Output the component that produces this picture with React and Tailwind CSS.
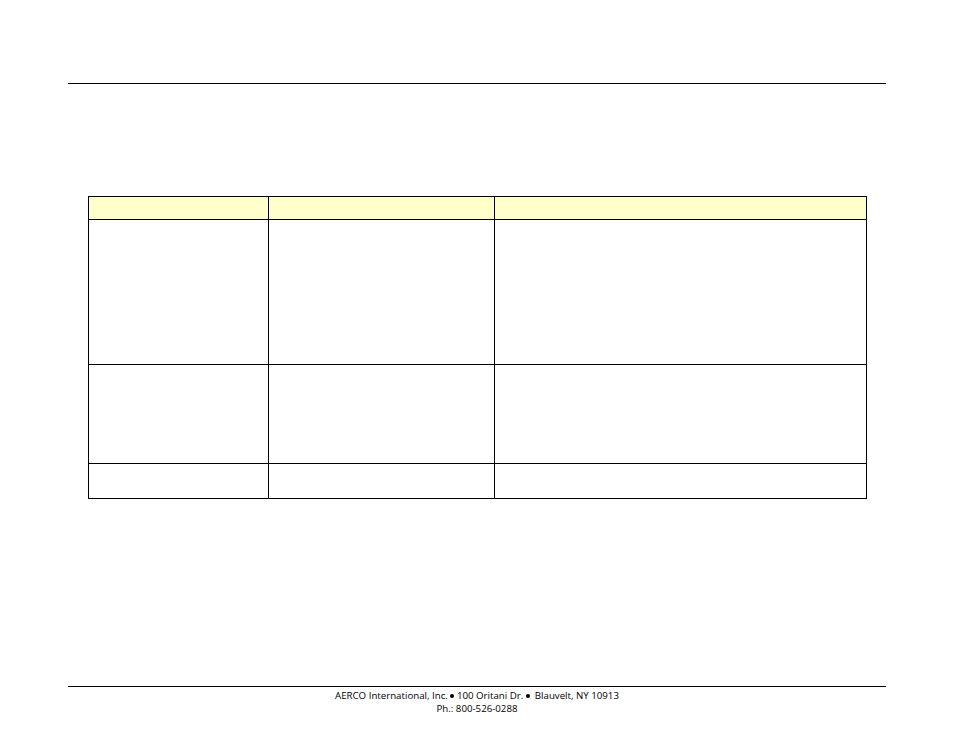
import React from 'react'

const rows = [
  { h: 'h-[23px]', bg: 'bg-[#ffffcc]' },
  { h: 'h-[145px]', bg: 'bg-white' },
  { h: 'h-[99px]', bg: 'bg-white' },
  { h: 'h-[35px]', bg: 'bg-white' },
]

const Dot = () => (
  <span className="inline-block w-[4px] h-[4px] rounded-full bg-black align-middle mb-[1px]" />
)

const App = () => {
  return (
    <div className="w-[954px] h-[738px] bg-white flex flex-col px-[68px]" style={{ fontFamily: '"Open Sans", "Liberation Sans", sans-serif' }}>
      <div className="mt-[83px] border-t border-black" />

      <div className="mt-[112px] ml-[20px] w-[779px] border-l border-t border-black">
        {rows.map((r, i) => (
          <div key={i} className={`flex ${r.h} ${r.bg}`}>
            <div className="w-[180px] border-r border-b border-black" />
            <div className="w-[226px] border-r border-b border-black" />
            <div className="flex-1 border-r border-b border-black" />
          </div>
        ))}
      </div>

      <div className="mt-auto mb-[23px]">
        <div className="border-t border-black" />
        <div className="mt-[2px] text-center text-[9.7px] leading-[13px] text-black">
          <p>
            AERCO International, Inc. <Dot /> 100 Oritani Dr. <Dot />&nbsp; Blauvelt, NY 10913
          </p>
          <p>Ph.: 800-526-0288</p>
        </div>
      </div>
    </div>
  )
}

export default App
